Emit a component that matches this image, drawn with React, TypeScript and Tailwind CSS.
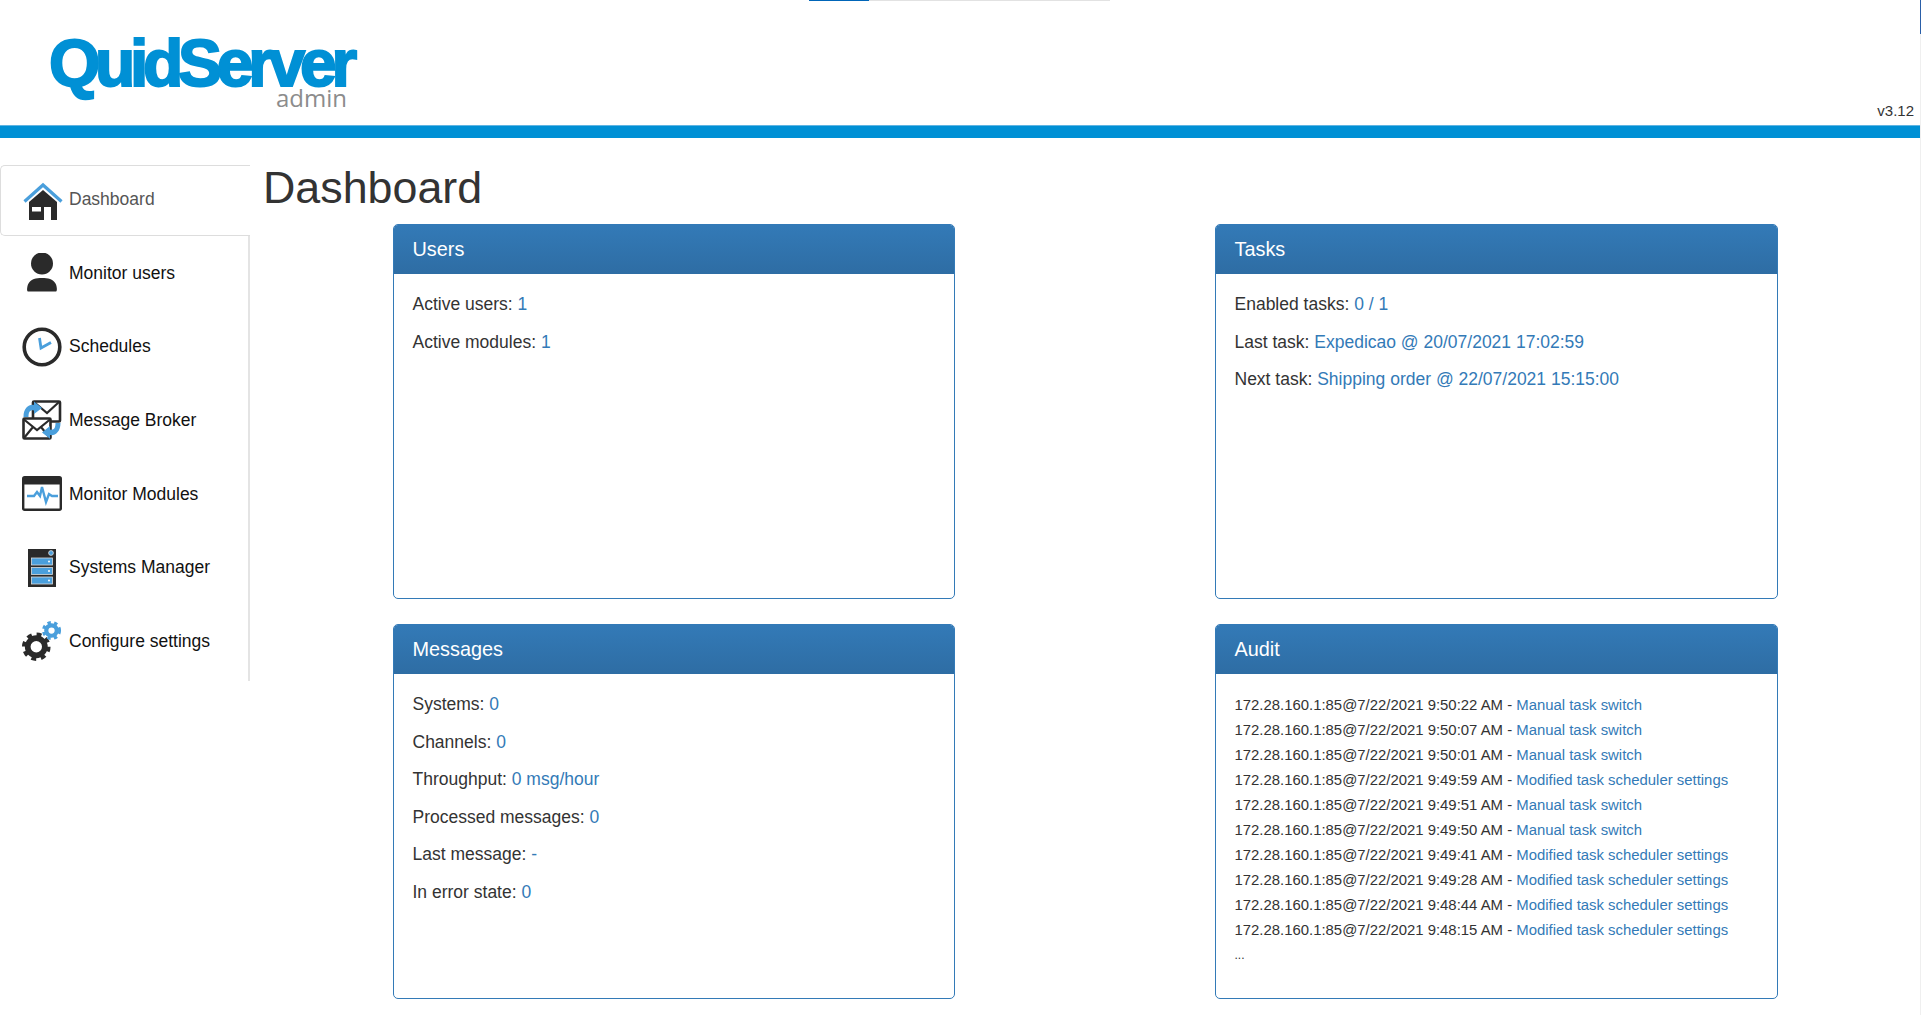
import React from 'react';

const HomeIcon = () => (
  <svg viewBox="0 0 40 40" className="w-[40px] h-[40px] mt-[4px]">
    <path d="M6 20 L20 8 L34 20 L34 38 L6 38 Z" fill="#2a2a2a" />
    <path d="M1.5 19.5 L20 3 L38.5 19.5" fill="none" stroke="#4a9fdc" strokeWidth="3.2" />
    <rect x="9" y="25" width="9" height="4.5" fill="#fff" />
    <rect x="21" y="25" width="7" height="13" fill="#fff" />
  </svg>
);

const UserIcon = () => (
  <svg viewBox="0 0 40 40" className="w-[40px] h-[40px]">
    <circle cx="20" cy="10.5" r="11" fill="#2a2a2a" />
    <path d="M6 38.5 C4.5 38.5 5 33 6.5 30.5 C9 26 14 25 20 25 C26 25 31 26 33.5 30.5 C35 33 35.5 38.5 34 38.5 Z" fill="#2a2a2a" />
  </svg>
);

const ClockIcon = () => (
  <svg viewBox="0 0 40 40" className="w-[40px] h-[40px]">
    <circle cx="20" cy="20" r="17.8" fill="#fff" stroke="#2a2a2a" strokeWidth="3.6" />
    <path d="M17.5 11 L19 21 L29 15.5" fill="none" stroke="#4a9fdc" strokeWidth="2.8" />
  </svg>
);

const BrokerIcon = () => (
  <svg viewBox="0 0 40 40" className="w-[40px] h-[40px]">
    <rect x="11" y="1.5" width="27" height="20" rx="1" fill="#fff" stroke="#2a2a2a" strokeWidth="2.6" />
    <path d="M12 2 L25 13 L37 2" fill="none" stroke="#2a2a2a" strokeWidth="2.2" />
    <rect x="1.5" y="18.5" width="27" height="20" rx="1" fill="#fff" stroke="#2a2a2a" strokeWidth="2.6" />
    <path d="M2 19.5 L15 30 L28 19.5 M2 38 L11 27 M28 38 L19 27" fill="none" stroke="#2a2a2a" strokeWidth="2.2" />
    <path d="M1.5 17 C1.5 8 7 4 12 5 L12 1.5 L20 8 L12 14 L12 10.5 C8 9.5 6.5 12 6.5 17 Z" fill="#4a9fdc" />
    <path d="M38.5 23 C38.5 32 33 36 28 35 L28 38.8 L20 32.5 L28 26 L28 29.5 C32 30.5 33.5 28 33.5 23 Z" fill="#4a9fdc" />
  </svg>
);

const ModulesIcon = () => (
  <svg viewBox="0 0 40 36" className="w-[40px] h-[36px]">
    <rect x="1.2" y="1.2" width="37.6" height="32.6" rx="1.5" fill="#fff" stroke="#2a2a2a" strokeWidth="2.4" />
    <rect x="1" y="1" width="38" height="7.5" fill="#2a2a2a" />
    <path d="M5 20 H12 L15 16 L18 20 L20 11 L24 26 L27 18 L30 20 H36" fill="none" stroke="#4a9fdc" strokeWidth="2.4" />
  </svg>
);

const ServerIcon = () => (
  <svg viewBox="0 0 40 40" className="w-[40px] h-[40px]">
    <rect x="6" y="1" width="28" height="38" fill="#2a2a2a" />
    <circle cx="29" cy="5" r="2.4" fill="#4a9fdc" stroke="#ddd" strokeWidth="0.8" />
    <rect x="9.5" y="10" width="21" height="7" fill="#4a9fdc" stroke="#ddd" strokeWidth="0.8" />
    <rect x="9.5" y="19.5" width="21" height="7" fill="#4a9fdc" stroke="#ddd" strokeWidth="0.8" />
    <rect x="9.5" y="29" width="21" height="7" fill="#4a9fdc" stroke="#ddd" strokeWidth="0.8" />
    <circle cx="27" cy="13.5" r="1" fill="#fff" />
    <circle cx="27" cy="23" r="1" fill="#fff" />
    <circle cx="27" cy="32.5" r="1" fill="#fff" />
  </svg>
);

const GearsIcon = () => (
  <svg viewBox="0 0 42 42" className="w-[42px] h-[42px]">
    <circle cx="15" cy="27" r="9" fill="none" stroke="#2a2a2a" strokeWidth="6" />
    <circle cx="15" cy="27" r="13" fill="none" stroke="#2a2a2a" strokeWidth="4" strokeDasharray="5.1 5.1" />
    <circle cx="31" cy="10" r="5.5" fill="none" stroke="#4a9fdc" strokeWidth="4.4" />
    <circle cx="31" cy="10" r="8.5" fill="none" stroke="#4a9fdc" strokeWidth="3" strokeDasharray="3.55 3.55" />
  </svg>
);

const navItems = [
  { label: 'Monitor users', icon: <UserIcon /> },
  { label: 'Schedules', icon: <ClockIcon /> },
  { label: 'Message Broker', icon: <BrokerIcon /> },
  { label: 'Monitor Modules', icon: <ModulesIcon /> },
  { label: 'Systems Manager', icon: <ServerIcon /> },
  { label: 'Configure settings', icon: <GearsIcon /> },
];

const audit = [
  ['9:50:22 AM', 'Manual task switch'],
  ['9:50:07 AM', 'Manual task switch'],
  ['9:50:01 AM', 'Manual task switch'],
  ['9:49:59 AM', 'Modified task scheduler settings'],
  ['9:49:51 AM', 'Manual task switch'],
  ['9:49:50 AM', 'Manual task switch'],
  ['9:49:41 AM', 'Modified task scheduler settings'],
  ['9:49:28 AM', 'Modified task scheduler settings'],
  ['9:48:44 AM', 'Modified task scheduler settings'],
  ['9:48:15 AM', 'Modified task scheduler settings'],
];

const Panel: React.FC<{ title: string; children: React.ReactNode }> = ({ title, children }) => (
  <div className="h-[375px] border border-[#337ab7] rounded-[5px] overflow-hidden">
    <div className="h-[49px] px-[18.5px] pt-[1px] flex items-center text-[19.85px] text-white bg-gradient-to-b from-[#337ab7] to-[#2e6da4]">
      {title}
    </div>
    <div className="px-[18.5px] pt-[18.5px]">{children}</div>
  </div>
);

const Row: React.FC<{ label: string; value: string }> = ({ label, value }) => (
  <p className="mb-[12.5px] leading-[25px]">
    {label} <span className="text-[#337ab7]">{value}</span>
  </p>
);

export default function App() {
  return (
    <div className="relative h-[1015px] overflow-hidden bg-white text-[17.5px] text-[#333] font-['Liberation_Sans',Arial,sans-serif]">
      <div className="absolute top-0 left-[809px] flex h-[1px]">
        <div className="w-[60px] bg-[#0065b8]" />
        <div className="w-[241px] bg-[#e2e2e2]" />
      </div>
      <div className="absolute top-0 right-0 bottom-0 w-[1px] bg-[#efefef]">
        <div className="h-[34px] bg-[#2a5fa8]" />
      </div>

      <header className="h-[125px] flex justify-between items-end pr-[7px]">
        <div className="ml-[49px] mb-[17px] w-[308px] flex flex-col">
          <div className="text-[66px] leading-[46px] mb-[2px] font-bold tracking-[-5.3px] whitespace-nowrap text-[#0090d5] [-webkit-text-stroke:2px_#0090d5]">
            QuidServer
          </div>
          <div className="self-end font-['Open_Sans',sans-serif] text-[24px] leading-[20px] text-[#8c8c8c] pr-[10px]">admin</div>
        </div>
        <div className="text-[15px] leading-[20px] mb-[4px]">v3.12</div>
      </header>
      <div className="h-[13px] bg-[#0090d5] border-t border-t-[#5fb4e2]" />

      <div className="flex">
        <nav className="w-[250px] shrink-0 mt-[27px]">
          <div className="h-[71px] flex items-center gap-[6px] pl-[22px] pb-[2px] text-[#555] border border-r-0 border-[#ddd] rounded-l-[5px]">
            <span className="w-[40px] flex justify-center"><HomeIcon /></span>
            Dashboard
          </div>
          <div className="border-r-2 border-r-[#e4e4e4] h-[445px]">
            {navItems.map((item) => (
              <div key={item.label} className="h-[73.7px] flex items-center gap-[7px] pl-[22px] text-[#111]">
                <span className="w-[40px] flex justify-center">{item.icon}</span>
                {item.label}
              </div>
            ))}
          </div>
        </nav>

        <main className="flex-1 pl-[13px]">
          <h1 className="text-[44.8px] leading-[48.5px] mt-[25px] mb-[12px] font-normal">Dashboard</h1>
          <div className="ml-[130px] grid grid-cols-[562px_563px] gap-x-[260px] gap-y-[25px]">
            <Panel title="Users">
              <Row label="Active users:" value="1" />
              <Row label="Active modules:" value="1" />
            </Panel>
            <Panel title="Tasks">
              <Row label="Enabled tasks:" value="0 / 1" />
              <Row label="Last task:" value="Expedicao @ 20/07/2021 17:02:59" />
              <Row label="Next task:" value="Shipping order @ 22/07/2021 15:15:00" />
            </Panel>
            <Panel title="Messages">
              <Row label="Systems:" value="0" />
              <Row label="Channels:" value="0" />
              <Row label="Throughput:" value="0 msg/hour" />
              <Row label="Processed messages:" value="0" />
              <Row label="Last message:" value="-" />
              <Row label="In error state:" value="0" />
            </Panel>
            <Panel title="Audit">
              <div className="text-[14.9px] leading-[25px] mt-[1px]">
                {audit.map(([time, action]) => (
                  <div key={time}>
                    172.28.160.1:85@7/22/2021 {time} - <span className="text-[#337ab7]">{action}</span>
                  </div>
                ))}
                <div className="text-[12px]">...</div>
              </div>
            </Panel>
          </div>
        </main>
      </div>
    </div>
  );
}
